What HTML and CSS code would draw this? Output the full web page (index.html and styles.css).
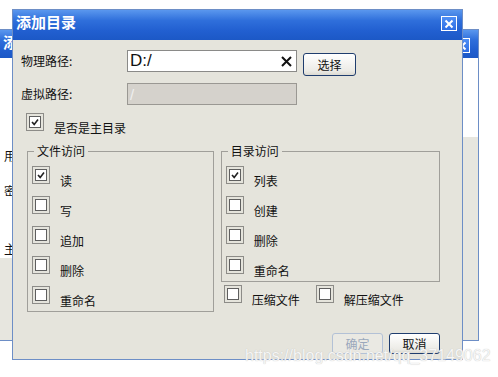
FILE: index.html
```html
<!DOCTYPE html>
<html lang="zh-CN">
<head>
    <meta charset="UTF-8">
    <title>添加目录</title>
    <link rel="stylesheet" href="styles.css">
</head>
<body>
<div class="desktop">

    <!-- main window, behind the dialog -->
    <div class="window back">
        <div class="titlebar">
            <span class="title">添加用户</span>
            <span class="close"><svg width="10" height="10" viewBox="0 0 10 10"><path d="M1.5 1.5L8.5 8.5M8.5 1.5L1.5 8.5" stroke="#fff" stroke-width="2"/></svg></span>
        </div>
        <div class="back-body">
            <div class="back-form">
                <p>用户名:</p>
                <p>密码:</p>
                <p class="far">主目录:</p>
            </div>
            <div class="back-side"></div>
        </div>
    </div>

    <!-- dialog -->
    <div class="window dialog">
        <div class="titlebar">
            <span class="title">添加目录</span>
            <span class="close"><svg width="10" height="10" viewBox="0 0 10 10"><path d="M1.5 1.5L8.5 8.5M8.5 1.5L1.5 8.5" stroke="#fff" stroke-width="2"/></svg></span>
        </div>

        <div class="body">
            <div class="field">
                <span class="field-label">物理路径:</span>
                <div class="text-input">
                    <span>D:/</span>
                    <svg width="11" height="11" viewBox="0 0 11 11"><path d="M1 1L10 10M10 1L1 10" stroke="#111" stroke-width="2"/></svg>
                </div>
                <button class="btn pick">选择</button>
            </div>
            <div class="field">
                <span class="field-label">虚拟路径:</span>
                <div class="text-input disabled"><span>/</span></div>
            </div>

            <div class="check main-check">
                <span class="cb checked"><i></i></span>
                <span class="cb-label">是否是主目录</span>
            </div>

            <div class="groups">
                <fieldset class="group file-group">
                    <legend>文件访问</legend>
                    <div class="check"><span class="cb checked"><i></i></span><span class="cb-label">读</span></div>
                    <div class="check"><span class="cb"><i></i></span><span class="cb-label">写</span></div>
                    <div class="check"><span class="cb"><i></i></span><span class="cb-label">追加</span></div>
                    <div class="check"><span class="cb"><i></i></span><span class="cb-label">删除</span></div>
                    <div class="check"><span class="cb"><i></i></span><span class="cb-label">重命名</span></div>
                </fieldset>

                <div class="right-col">
                    <fieldset class="group dir-group">
                        <legend>目录访问</legend>
                        <div class="check"><span class="cb checked"><i></i></span><span class="cb-label">列表</span></div>
                        <div class="check"><span class="cb"><i></i></span><span class="cb-label">创建</span></div>
                        <div class="check"><span class="cb"><i></i></span><span class="cb-label">删除</span></div>
                        <div class="check"><span class="cb"><i></i></span><span class="cb-label">重命名</span></div>
                    </fieldset>
                    <div class="extra">
                        <div class="check"><span class="cb"><i></i></span><span class="cb-label">压缩文件</span></div>
                        <div class="check"><span class="cb"><i></i></span><span class="cb-label">解压缩文件</span></div>
                    </div>
                </div>
            </div>

            <div class="actions">
                <button class="btn" disabled>确定</button>
                <button class="btn">取消</button>
            </div>
        </div>
    </div>

    <div class="watermark">https://blog.csdn.net/qq_37149062</div>
</div>
</body>
</html>
```

FILE: styles.css
```css
* {
    margin: 0;
    padding: 0;
    box-sizing: border-box;
}

body {
    font-family: "Noto Sans CJK SC", sans-serif;
    font-size: 12px;
    color: #111;
    background: #fff;
}

.desktop {
    position: relative;
    width: 498px;
    height: 377px;
    overflow: hidden;
}

/* windows */
.window {
    position: absolute;
    display: flex;
    flex-direction: column;
    border: 1px solid #6d8ec6;
}

.titlebar {
    display: flex;
    justify-content: space-between;
    align-items: flex-start;
    height: 30px;
    flex-shrink: 0;
    background: linear-gradient(#5a97ee 0%, #2f6fdb 35%, #215fd0 70%, #1c58c6 100%);
}

.title {
    color: #fff;
    font-weight: bold;
    font-size: 15px;
    line-height: 18px;
    padding: 3px 0 0 3px;
}

.close {
    display: flex;
    align-items: center;
    justify-content: center;
    width: 16px;
    height: 15px;
    margin: 6px 5px 0 0;
    border: 1px solid #fff;
    background: linear-gradient(#4f8ff5, #2f6ee4);
}

.back {
    left: -1px;
    top: 29px;
    width: 480px;
    height: 312px;
    background: #e7e6df;
}

.back .titlebar {
    height: 28px;
}

.back .close {
    margin: 8px 8px 0 0;
}

.back-body {
    display: flex;
    justify-content: space-between;
    align-items: flex-start;
}

.back-form {
    width: 200px;
    height: 200px;
    background: #fff;
    padding: 90px 0 0 4px;
}

.back-form p {
    line-height: 16px;
}

.back-form p + p {
    margin-top: 19px;
}

.back-form p.far {
    margin-top: 42px;
}

.back-side {
    width: 60px;
    height: 79px;
    background: #fff;
}

/* dialog */
.dialog {
    left: 12px;
    top: 9px;
    width: 451px;
    height: 351px;
    background: #e5e4dc;
}

.body {
    display: flex;
    flex-direction: column;
    padding: 10px 22px 0 8px;
}

.field {
    display: flex;
    align-items: center;
    height: 22px;
}

.field + .field {
    margin-top: 11px;
}

.field-label {
    width: 106px;
    line-height: 16px;
}

.text-input {
    display: flex;
    align-items: center;
    justify-content: space-between;
    width: 170px;
    height: 22px;
    padding: 0 4px 0 2px;
    border: 1px solid #8a8a88;
    background: #fff;
    font-family: "Liberation Sans", sans-serif;
    font-size: 17px;
}

.text-input.disabled {
    background: #d5d2cc;
    border-color: #9a9893;
    color: #efefef;
    font-size: 15px;
}

.btn {
    width: 51px;
    height: 21px;
    font-family: "Noto Sans CJK SC", sans-serif;
    font-size: 12px;
    color: #111;
    border: 1px solid #1f3d6e;
    border-radius: 3px;
    background: linear-gradient(#ffffff, #ecebe6 80%, #dcdad2);
}

.btn:disabled {
    color: #9aa8bc;
    border-color: #b3c1d6;
    background: #eae9e3;
}

.btn.pick {
    width: 53px;
    height: 23px;
    margin-left: 6px;
    align-self: flex-start;
    margin-top: 3px;
}

/* checkboxes */
.check {
    display: flex;
    align-items: flex-start;
}

.cb {
    display: flex;
    align-items: center;
    justify-content: center;
    width: 18px;
    height: 18px;
    border: 1px solid #8d8c88;
    flex-shrink: 0;
}

.cb i {
    display: block;
    width: 12px;
    height: 12px;
    border: 1px solid #5f5f5f;
    background: #fff;
}

.cb.checked i {
    background: #fff url("data:image/svg+xml,%3Csvg xmlns='http://www.w3.org/2000/svg' width='10' height='10'%3E%3Cpath d='M2 5l2.2 2.4L8 2.6' fill='none' stroke='%23222' stroke-width='1.6'/%3E%3C/svg%3E") center no-repeat;
}

.cb-label {
    line-height: 16px;
    margin: 7px 0 0 10px;
    white-space: nowrap;
}

.main-check {
    margin: 8px 0 0 5px;
}

.groups {
    display: flex;
    align-items: flex-start;
    margin: 7px 0 0 6px;
}

.group {
    border: 1px solid #a09f9a;
    padding: 1px 4px 1px;
    min-width: 0;
}

.group legend {
    padding: 0 3px;
    margin-left: 2px;
    line-height: 16px;
}

.group .check {
    height: 30px;
}

.group .cb {
    margin-top: 6px;
}

.group .cb-label {
    margin-top: 13px;
}

.file-group {
    width: 188px;
}

.right-col {
    width: 221px;
    margin-left: 7px;
}

.extra {
    display: flex;
    padding-left: 3px;
}

.extra .cb {
    margin-top: 3px;
}

.extra .cb-label {
    margin-top: 10px;
}

.extra .check + .check {
    margin-left: 16px;
}

.actions {
    display: flex;
    justify-content: flex-end;
    gap: 6px;
    margin-top: 21px;
}

.watermark {
    position: absolute;
    left: 245px;
    top: 347px;
    font-family: "Liberation Sans", sans-serif;
    font-size: 16px;
    color: #f6f6f6;
    text-shadow: 0 0 1px #b8b8b8;
    white-space: nowrap;
}
```
